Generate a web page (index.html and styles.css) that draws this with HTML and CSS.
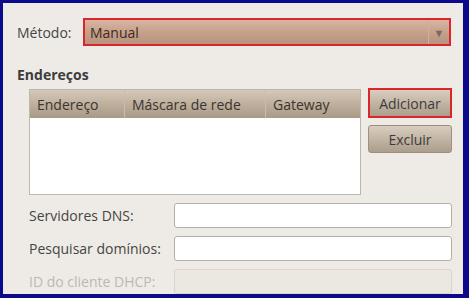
FILE: index.html
```html
<!DOCTYPE html>
<html lang="pt">
<head>
    <meta charset="UTF-8">
    <title>Configurações IPv4</title>
    <link rel="stylesheet" href="styles.css">
</head>
<body>
    <div class="frame">
        <div class="method-row">
            <span class="label">Método:</span>
            <div class="combo">
                <span class="combo-text">Manual</span>
                <span class="combo-arrow">▼</span>
            </div>
        </div>
        <div class="section-title">Endereços</div>
        <div class="address-row">
            <div class="address-table">
                <div class="table-head">
                    <div class="col col-addr">Endereço</div>
                    <div class="col col-mask">Máscara de rede</div>
                    <div class="col col-gw">Gateway</div>
                </div>
            </div>
            <div class="buttons">
                <button class="button highlight">Adicionar</button>
                <button class="button">Excluir</button>
            </div>
        </div>
        <div class="field">
            <span class="field-label">Servidores DNS:</span>
            <div class="entry"></div>
        </div>
        <div class="field">
            <span class="field-label">Pesquisar domínios:</span>
            <div class="entry"></div>
        </div>
        <div class="field disabled">
            <span class="field-label">ID do cliente DHCP:</span>
            <div class="entry"></div>
        </div>
    </div>
</body>
</html>
```

FILE: styles.css
```css
body {
    margin: 0;
    font-family: "Open Sans", sans-serif;
    font-size: 14px;
    color: #3c3c3c;
}
.frame {
    width: 469px;
    height: 298px;
    box-sizing: border-box;
    border-style: solid;
    border-color: #0a0a8a;
    border-width: 3px 6px 4px 3px;
    background-color: #eeebe6;
    overflow: hidden;
}
.method-row {
    display: flex;
    align-items: center;
    margin: 15px 12px 0 14px;
}
.label {
    width: 66px;
    color: #454545;
}
.combo {
    flex: 1;
    height: 28px;
    box-sizing: border-box;
    border: 2px solid #d8262a;
    background: linear-gradient(to bottom, #d9b4a0, #c29d88 60%, #b8937f);
    display: flex;
    align-items: center;
}
.combo-text {
    flex: 1;
    padding-left: 5px;
    color: #3e2a20;
}
.combo-arrow {
    width: 20px;
    height: 100%;
    border-left: 1px solid #cfae9c;
    display: flex;
    align-items: center;
    justify-content: center;
    font-size: 11px;
    color: #786862;
}
.section-title {
    font-weight: bold;
    margin: 19px 0 0 14px;
    color: #3c3c3c;
}
.address-row {
    display: flex;
    margin: 5px 0 0 26px;
    gap: 7px;
}
.address-table {
    width: 332px;
    height: 106px;
    box-sizing: border-box;
    border: 1px solid #bdb6ab;
    background-color: white;
}
.table-head {
    display: flex;
    height: 28px;
    background: linear-gradient(to bottom, #d6c9b9, #bfb09d 50%, #a99a87);
}
.col {
    display: flex;
    align-items: center;
    padding-left: 7px;
    border-right: 1px solid #c9bcab;
    color: #3a3530;
}
.col-addr {
    width: 87px;
}
.col-mask {
    width: 133px;
}
.col-gw {
    flex: 1;
    border-right: none;
}
.buttons {
    display: flex;
    flex-direction: column;
    gap: 7px;
    margin-top: -1px;
}
.button {
    width: 84px;
    height: 28px;
    font-family: inherit;
    font-size: 14px;
    color: #3c3c3c;
    border: 1px solid #9e9080;
    border-radius: 3px;
    background: linear-gradient(to bottom, #d8cdbf, #bdb09f 60%, #ab9e8c);
    padding: 0;
}
.button.highlight {
    height: 30px;
    border: 2px solid #d8262a;
    border-radius: 0;
}
.field {
    display: flex;
    align-items: center;
    margin: 8px 11px 0 26px;
}
.field-label {
    width: 145px;
    color: #454545;
}
.entry {
    flex: 1;
    height: 25px;
    box-sizing: border-box;
    border: 1px solid #b6afa4;
    border-radius: 3px;
    background-color: white;
}
.disabled .field-label {
    color: #bcb8b2;
}
.disabled .entry {
    background-color: #ebe8e2;
    border-color: #d9d4cc;
}
```
